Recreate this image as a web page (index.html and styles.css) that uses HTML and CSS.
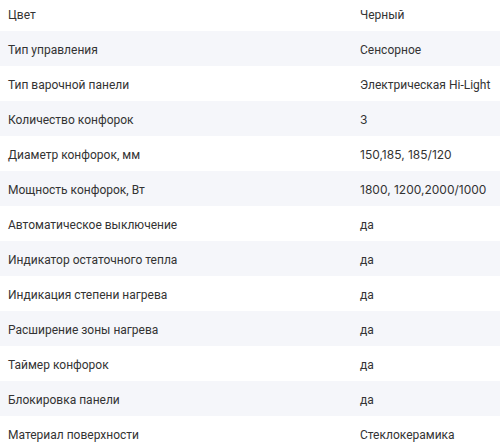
FILE: index.html
```html
<!DOCTYPE html>
<html lang="ru">
<head>
<meta charset="utf-8">
<link rel="stylesheet" href="styles.css">
</head>
<body>
<div class="specs">
  <div class="row"><span class="label">Цвет</span><span class="value">Черный</span></div>
  <div class="row"><span class="label">Тип управления</span><span class="value">Сенсорное</span></div>
  <div class="row"><span class="label">Тип варочной панели</span><span class="value">Электрическая Hi-Light</span></div>
  <div class="row"><span class="label">Количество конфорок</span><span class="value num">3</span></div>
  <div class="row"><span class="label">Диаметр конфорок, мм</span><span class="value num">150,185, 185/120</span></div>
  <div class="row"><span class="label">Мощность конфорок, Вт</span><span class="value num">1800, 1200,2000/1000</span></div>
  <div class="row"><span class="label">Автоматическое выключение</span><span class="value">да</span></div>
  <div class="row"><span class="label">Индикатор остаточного тепла</span><span class="value">да</span></div>
  <div class="row"><span class="label">Индикация степени нагрева</span><span class="value">да</span></div>
  <div class="row"><span class="label">Расширение зоны нагрева</span><span class="value">да</span></div>
  <div class="row"><span class="label">Таймер конфорок</span><span class="value">да</span></div>
  <div class="row"><span class="label">Блокировка панели</span><span class="value">да</span></div>
  <div class="row"><span class="label">Материал поверхности</span><span class="value">Стеклокерамика</span></div>
</div>
</body>
</html>
```
FILE: styles.css
```css
html, body {
  margin: 0;
  padding: 0;
  background: #ffffff;
}
body {
  font-family: Roboto, "Noto Sans", sans-serif;
  font-size: 12px;
  color: #333333;
  overflow: hidden;
}
.specs {
  margin-top: -4px;
}
.row {
  display: grid;
  grid-template-columns: 352px 1fr;
  align-items: center;
  height: 35px;
  padding-left: 8px;
  padding-top: 2px;
  box-sizing: border-box;
  white-space: nowrap;
}
.row:nth-child(even) {
  background: #f5f6fa;
}
.num {
  font-family: Inter, Roboto, sans-serif;
  font-size: 12px;
}
```
